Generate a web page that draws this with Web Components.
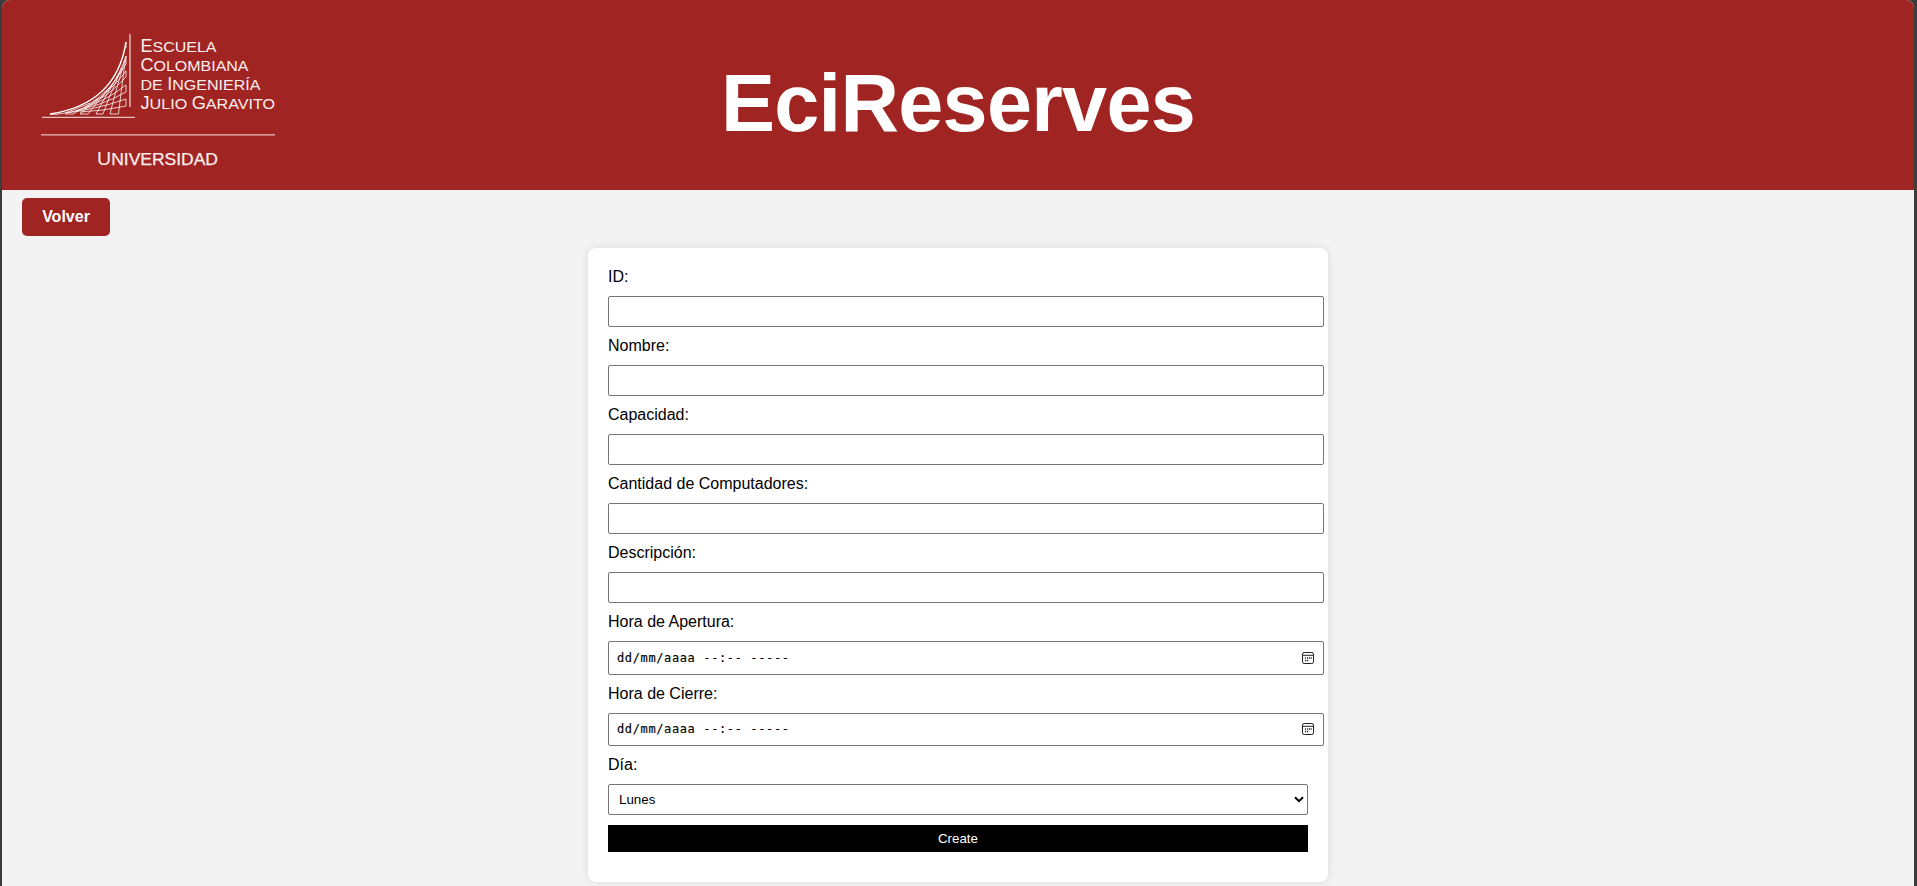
<!DOCTYPE html>
<html lang="es"><head><meta charset="utf-8"><title>EciReserves</title>
<style>
html{background:#3b3b3b}
body{margin:0;height:886px;overflow:hidden;font-family:"Liberation Sans",Arial,sans-serif;font-size:16px;color:#000}
</style></head><body>
<reserves-app></reserves-app>
<script>
const define=(name,html)=>customElements.define(name,class extends HTMLElement{
  constructor(){super();this.attachShadow({mode:'open'}).innerHTML=html;}
});
define('eci-logo',`<style>:host{display:block;width:240px;height:140px}svg{display:block}text{fill:#fbeeee}</style>
<svg width="240" height="140" viewBox="38 32 240 140" fill="none" stroke="#fff" stroke-width="1" font-family="Liberation Sans,Arial,sans-serif">
<path stroke-width="1.5" d="M50 114C90 108 119 87 126 42"/>
<g stroke-opacity=".75">
<path d="M50 114.300H58M65 114H73M80 114H88M96 114H103M110 114H118.500"/>
<path d="M126 42V48M126 56V64M126 71V77M126 85V92M126 99V106"/>
<path d="M80 112Q103 111 126 106M58 114Q95 110 126 99M66 113Q102 106 126 92M75 111Q105 102 126 85M84 108Q108 97 126 77M93 103Q112 90 126 71M102 97Q117 80 126 64M109 89Q120 74 126 56"/>
<path d="M118.500 114Q121 92 126 56M110 114Q115 93 125 60M103 114Q109 97 122 68M96 114Q106 95 120 72M88 114Q98 101 114 82M80 114Q94 102 110 87M73 114Q86 107 98 98M65 113Q78 108 90 103"/>
</g>
<path stroke-opacity=".5" stroke-width="2" d="M130 34V107"/>
<path stroke-opacity=".72" stroke-width="1.3" d="M42 117.300H135M41 134.800H275"/>
<g stroke="none"><text x="140.500" y="52" font-size="17.500" textLength="76" lengthAdjust="spacingAndGlyphs">E<tspan font-size="15.500">SCUELA</tspan></text>
<text x="140.500" y="71" font-size="17.500" textLength="108" lengthAdjust="spacingAndGlyphs">C<tspan font-size="15.500">OLOMBIANA</tspan></text>
<text x="140.500" y="90" font-size="15.500" textLength="120" lengthAdjust="spacingAndGlyphs">DE <tspan font-size="17.500">I</tspan>NGENIERÍA</text>
<text x="140.500" y="109.300" font-size="17.500" textLength="134.500" lengthAdjust="spacingAndGlyphs">J<tspan font-size="15.500">ULIO </tspan>G<tspan font-size="15.500">ARAVITO</tspan></text>
<text x="97" y="165" font-size="18.500" textLength="121" lengthAdjust="spacingAndGlyphs">U<tspan font-size="16.500" stroke="#fbeeee" stroke-width=".25">NIVERSIDAD</tspan></text></g></svg>`);
define('site-header',`<style>:host{display:grid;grid-template-columns:1fr auto 1fr;align-items:center;height:190px;background:#a02422;border-radius:8px 8px 0 0;color:#fff}
eci-logo{align-self:start;margin:32px 0 0 36px}h1{margin:16px 0 0;font-size:81px;letter-spacing:-.7px;line-height:94px}</style><eci-logo></eci-logo><h1><slot></slot></h1>`);
define('back-button',`<style>:host{display:block;width:88px}button{display:block;width:88px;height:38px;padding:0;border:0;border-radius:5px;background:#a02422;color:#fff;font:bold 16px "Liberation Sans",Arial,sans-serif}</style><button><slot></slot></button>`);
define('form-card',`<style>:host{display:flex;flex-direction:column;gap:10px;box-sizing:border-box;width:740px;height:634px;padding:20px;border-radius:8px;background:#fff;box-shadow:0 0 10px rgba(0,0,0,.1)}</style><slot></slot>`);
customElements.define('form-field',class extends HTMLElement{
  connectedCallback(){
    const type=this.getAttribute('type');
    const cal='<svg width="12" height="12" viewBox="0 0 12 12" fill="none" stroke="#222" stroke-width="1"><rect x=".5" y=".5" width="11" height="11" rx="1.700"/><path d="M.5 3.300H11.500"/><path stroke-width="1.300" d="M5 6H6.200M7 6H8.200M8.800 6H9.700M3 6H4M3 8.500H4.200M5 8.500H6.200"/></svg>';
    const chev='<svg width="10" height="7" viewBox="0 0 10 7" fill="none" stroke="#000" stroke-width="2"><path d="M1 1.200L5 5.200L9 1.200"/></svg>';
    const control=type==='date'?`<div class="control date"><span>dd/mm/aaaa --:-- -----</span>${cal}</div>`:
      type==='select'?`<div class="control select"><span>${this.getAttribute('value')}</span>${chev}</div>`:'<input class="control">';
    this.attachShadow({mode:'open'}).innerHTML=`<style>
:host{display:flex;flex-direction:column;gap:10px;flex:none}
label{display:block;height:18px;line-height:18px}
.control{display:flex;align-items:center;justify-content:space-between;box-sizing:border-box;width:716px;height:31px;margin:0;border:1px solid #767676;border-radius:2px;background:#fff;outline:0}
.date{height:33.500px;padding:0 9.500px 0 8px;font:12px "DejaVu Sans Mono",monospace;letter-spacing:.620px;white-space:pre;-webkit-text-stroke:.15px #000}
.select{width:700px;padding:0 3px 0 10px;font-size:13.333px}
</style><label><slot></slot></label>${control}`;
  }
});
define('submit-button',`<style>:host{display:block}button{display:block;width:700px;height:27px;border:0;padding:0;background:#000;color:#fff;font:13.333px "Liberation Sans",Arial,sans-serif}</style><button><slot></slot></button>`);
define('reserves-app',`<style>:host{display:block;box-sizing:border-box;height:886px;padding:0 3px 0 2px;background:#3b3b3b}
main{height:886px;background:#f3f3f3;border-radius:8px 8px 0 0}back-button{padding:8px 0 0 20px}form-card{margin:12px auto 0}</style>
<main><site-header>EciReserves</site-header><back-button>Volver</back-button>
<form-card><form-field>ID:</form-field><form-field>Nombre:</form-field><form-field>Capacidad:</form-field><form-field>Cantidad de Computadores:</form-field><form-field>Descripción:</form-field><form-field type="date">Hora de Apertura:</form-field><form-field type="date">Hora de Cierre:</form-field><form-field type="select" value="Lunes">Día:</form-field><submit-button>Create</submit-button></form-card></main>`);
</script></body></html>
